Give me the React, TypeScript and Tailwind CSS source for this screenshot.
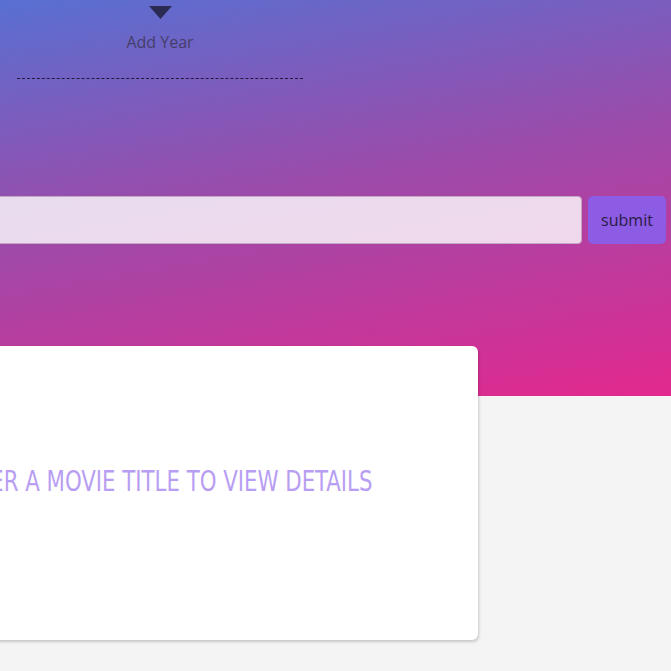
const App = () => {
  return (
    <div className="min-h-screen overflow-hidden bg-[#f4f4f4] font-['Open_Sans',sans-serif]">
      <header className="h-[396px] bg-[linear-gradient(170deg,#5870d2_0%,#9a4cab_45%,#e3288e_100%)] pt-[6px]">
        <div className="ml-[17px] flex w-[286px] flex-col items-center border-b border-dashed border-[#1f1a3d] pb-[24px]">
          <svg width="23" height="13" viewBox="0 0 23 13">
            <polygon points="0,0 23,0 11.5,13" fill="#2b2a52" />
          </svg>
          <span className="mt-[11px] text-base leading-6 text-[#463d6b]">Add Year</span>
        </div>
        <form className="mt-[117px] ml-[-200px] flex gap-[6px] pr-[5px]">
          <input
            type="text"
            className="h-[48px] flex-1 rounded border border-[#c3a5c4] bg-white/80 px-3 outline-none"
          />
          <button
            type="button"
            className="h-[48px] w-[78px] rounded-[5px] bg-[#8c5ce4] text-base text-[#2a1b45]"
          >
            submit
          </button>
        </form>
      </header>
      <main className="-mt-[50px] ml-[-138px] flex h-[294px] w-[616px] justify-center rounded-md bg-white pt-[119px] pr-5 shadow-[1px_2px_3px_rgba(0,0,0,0.18)]">
        <h2 className="scale-x-[0.816] whitespace-nowrap font-['DejaVu_Sans_Condensed','DejaVu_Sans',sans-serif] text-[29px] leading-8 uppercase text-[#b89ef2]">
          Enter a movie title to view details
        </h2>
      </main>
    </div>
  );
};

export default App;
